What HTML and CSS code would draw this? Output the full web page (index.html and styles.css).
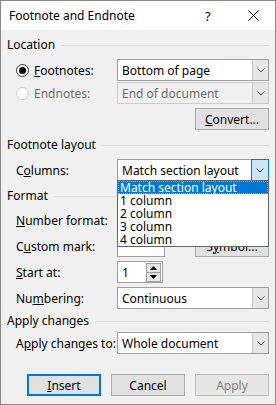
FILE: index.html
```html
<!DOCTYPE html>
<html lang="en">
<head>
    <meta charset="UTF-8">
    <meta name="viewport" content="width=device-width, initial-scale=1.0">
    <title>Footnote and Endnote</title>
    <link rel="stylesheet" href="styles.css">
</head>
<body>

    <div class="window">
        <div class="titlebar">
            <span class="title">Footnote and Endnote</span>
            <span class="help">?</span>
            <span class="close">
                <svg width="11" height="11" viewBox="0 0 11 11">
                    <path d="M0.5 0.5 L10.5 10.5 M10.5 0.5 L0.5 10.5" stroke="#000" stroke-width="1" fill="none"/>
                </svg>
            </span>
        </div>

        <div class="content">
            <div class="group-head">Location</div>

            <div class="row">
                <label class="radio-label">
                    <span class="radio checked"></span>
                    <span><u>F</u>ootnotes:</span>
                </label>
                <div class="select">
                    <span class="select-text">Bottom of page</span>
                    <span class="select-arrow"><svg width="8" height="5" viewBox="0 0 8 5"><path d="M0.5 0.5 L4 4 L7.5 0.5" stroke="#606060" fill="none"/></svg></span>
                </div>
            </div>

            <div class="row row-tight">
                <label class="radio-label disabled">
                    <span class="radio"></span>
                    <span>Endnotes:</span>
                </label>
                <div class="select disabled">
                    <span class="select-text">End of document</span>
                    <span class="select-arrow"><svg width="8" height="5" viewBox="0 0 8 5"><path d="M0.5 0.5 L4 4 L7.5 0.5" stroke="#606060" fill="none"/></svg></span>
                </div>
            </div>

            <div class="row row-right">
                <button class="btn"><u>C</u>onvert...</button>
            </div>

            <div class="group-head">Footnote layout</div>

            <div class="row">
                <span class="label">C<u>o</u>lumns:</span>
                <div class="select open">
                    <span class="select-text">Match section layout</span>
                    <span class="select-arrow"><svg width="8" height="5" viewBox="0 0 8 5"><path d="M0.5 0.5 L4 4 L7.5 0.5" stroke="#404040" fill="none"/></svg></span>
                    <ul class="dropdown">
                        <li class="selected">Match section layout</li>
                        <li>1 column</li>
                        <li>2 column</li>
                        <li>3 column</li>
                        <li>4 column</li>
                    </ul>
                </div>
            </div>

            <div class="group-head">Format</div>

            <div class="row row-format row-first">
                <span class="label"><u>N</u>umber format:</span>
                <div class="select">
                    <span class="select-text"></span>
                    <span class="select-arrow"></span>
                </div>
            </div>

            <div class="row row-format">
                <span class="label">C<u>u</u>stom mark:</span>
                <div class="textbox short"></div>
                <button class="btn btn-symbol">S<u>y</u>mbol...</button>
            </div>

            <div class="row row-format">
                <span class="label"><u>S</u>tart at:</span>
                <div class="spinner">
                    <span class="spin-text">1</span>
                    <span class="spin-buttons">
                        <span class="spin-btn"><svg width="7" height="4" viewBox="0 0 7 4"><path d="M0 4 L3.5 0 L7 4 Z" fill="#000"/></svg></span>
                        <span class="spin-btn"><svg width="7" height="4" viewBox="0 0 7 4"><path d="M0 0 L3.5 4 L7 0 Z" fill="#000"/></svg></span>
                    </span>
                </div>
            </div>

            <div class="row row-format">
                <span class="label">Nu<u>m</u>bering:</span>
                <div class="select">
                    <span class="select-text">Continuous</span>
                    <span class="select-arrow"><svg width="8" height="5" viewBox="0 0 8 5"><path d="M0.5 0.5 L4 4 L7.5 0.5" stroke="#606060" fill="none"/></svg></span>
                </div>
            </div>

            <div class="group-head head-apply">Apply changes</div>

            <div class="row row-apply">
                <span class="label">A<u>p</u>ply changes to:</span>
                <div class="select">
                    <span class="select-text">Whole document</span>
                    <span class="select-arrow"><svg width="8" height="5" viewBox="0 0 8 5"><path d="M0.5 0.5 L4 4 L7.5 0.5" stroke="#606060" fill="none"/></svg></span>
                </div>
            </div>

            <div class="buttons">
                <button class="btn btn-default"><u>I</u>nsert</button>
                <button class="btn">Cancel</button>
                <button class="btn" disabled>Apply</button>
            </div>
        </div>
    </div>

</body>
</html>
```

FILE: styles.css
```css
body {
    margin: 0;
    font-family: "Noto Sans", sans-serif;
    font-size: 12px;
    color: #000;
}

.window {
    width: 276px;
    height: 405px;
    box-sizing: border-box;
    border: 1px solid #888;
    background-color: #f0f0f0;
    overflow: hidden;
}

.titlebar {
    height: 29px;
    background-color: #fff;
    display: flex;
    align-items: center;
}

.title {
    margin-left: 8px;
    flex: 1;
    font-size: 12px;
}

.help {
    width: 20px;
    margin-right: 23px;
    font-size: 13px;
}

.close {
    display: flex;
    margin-right: 16px;
}

.content {
    padding: 0 6px 0 6px;
}

.group-head {
    display: flex;
    align-items: center;
    height: 16px;
    line-height: 16px;
    margin-top: 7px;
}

.group-head::after {
    content: "";
    flex: 1;
    border-top: 1px solid #dcdcdc;
    margin-left: 6px;
}

.head-apply {
    margin-top: 4px;
}

.row {
    display: flex;
    align-items: center;
    height: 22px;
    margin-top: 6px;
}

.row-tight {
    margin-top: 1px;
}

.row-right {
    justify-content: flex-end;
    margin-top: 4px;
}

.row-format {
    margin-top: 4px;
}

.row-first {
    margin-top: 5px;
}

.row-apply {
    margin-top: 3px;
}

.label {
    width: 110px;
    box-sizing: border-box;
    padding-left: 9px;
    white-space: nowrap;
}

.radio-label {
    display: flex;
    align-items: center;
    width: 110px;
    box-sizing: border-box;
    padding-left: 9px;
    white-space: nowrap;
}

.radio-label.disabled {
    color: #6d6d6d;
}

.radio {
    width: 11px;
    height: 11px;
    border: 1px solid #333;
    border-radius: 50%;
    background-color: #fff;
    margin-right: 5px;
    display: flex;
    align-items: center;
    justify-content: center;
}

.radio.checked::after {
    content: "";
    width: 7px;
    height: 7px;
    border-radius: 50%;
    background-color: #000;
}

.radio-label.disabled .radio {
    border-color: #ccc;
    background-color: #fff;
}

.select {
    position: relative;
    flex: 1;
    height: 22px;
    box-sizing: border-box;
    border: 1px solid #a0a0a0;
    background-color: #fff;
    display: flex;
    align-items: center;
}

.select.disabled {
    background-color: #f0f0f0;
    border-color: #cccccc;
    color: #6d6d6d;
}

.select-text {
    flex: 1;
    padding-left: 4px;
    white-space: nowrap;
}

.select-arrow {
    width: 16px;
    height: 20px;
    box-sizing: border-box;
    border-left: 1px solid #c8c8c8;
    background-color: #e6e6e6;
    display: flex;
    align-items: center;
    justify-content: center;
}

.select.open .select-arrow {
    border: 1px solid #0078d7;
    background-color: #cce4f7;
    height: 22px;
    width: 18px;
    margin-right: -1px;
}

.dropdown {
    position: absolute;
    left: -1px;
    right: -1px;
    top: 20px;
    margin: 0;
    padding: 0;
    list-style: none;
    background-color: #fff;
    border: 1px solid #646464;
    z-index: 2;
}

.dropdown li {
    height: 13px;
    line-height: 13px;
    padding-left: 2px;
    white-space: nowrap;
}

.dropdown li.selected {
    background-color: #0078d7;
    color: #fff;
    outline: 1px dotted #f0a000;
    outline-offset: -1px;
}

.textbox {
    height: 22px;
    box-sizing: border-box;
    border: 1px solid #a0a0a0;
    background-color: #fff;
}

.textbox.short {
    width: 48px;
}

.btn {
    font-family: inherit;
    font-size: 12px;
    height: 22px;
    width: 74px;
    padding: 0;
    background-color: #e1e1e1;
    border: 1px solid #adadad;
    color: #000;
}

.btn-symbol {
    margin-left: auto;
}

.btn:disabled {
    color: #838383;
    background-color: #e6e6e6;
    border-color: #bfbfbf;
}

.btn-default {
    border: 2px solid #0078d7;
}

.spinner {
    width: 46px;
    height: 22px;
    box-sizing: border-box;
    border: 1px solid #a0a0a0;
    background-color: #fff;
    display: flex;
    align-items: center;
}

.spin-text {
    flex: 1;
    padding-left: 4px;
}

.spin-buttons {
    display: flex;
    flex-direction: column;
    margin-right: 1px;
    border: 1px solid #a0a0a0;
}

.spin-btn {
    width: 13px;
    height: 8px;
    background-color: #e6e6e6;
    display: flex;
    align-items: center;
    justify-content: center;
}

.spin-btn + .spin-btn {
    border-top: 1px solid #a0a0a0;
}

.buttons {
    display: flex;
    justify-content: flex-end;
    gap: 10px;
    margin-top: 20px;
}
```
